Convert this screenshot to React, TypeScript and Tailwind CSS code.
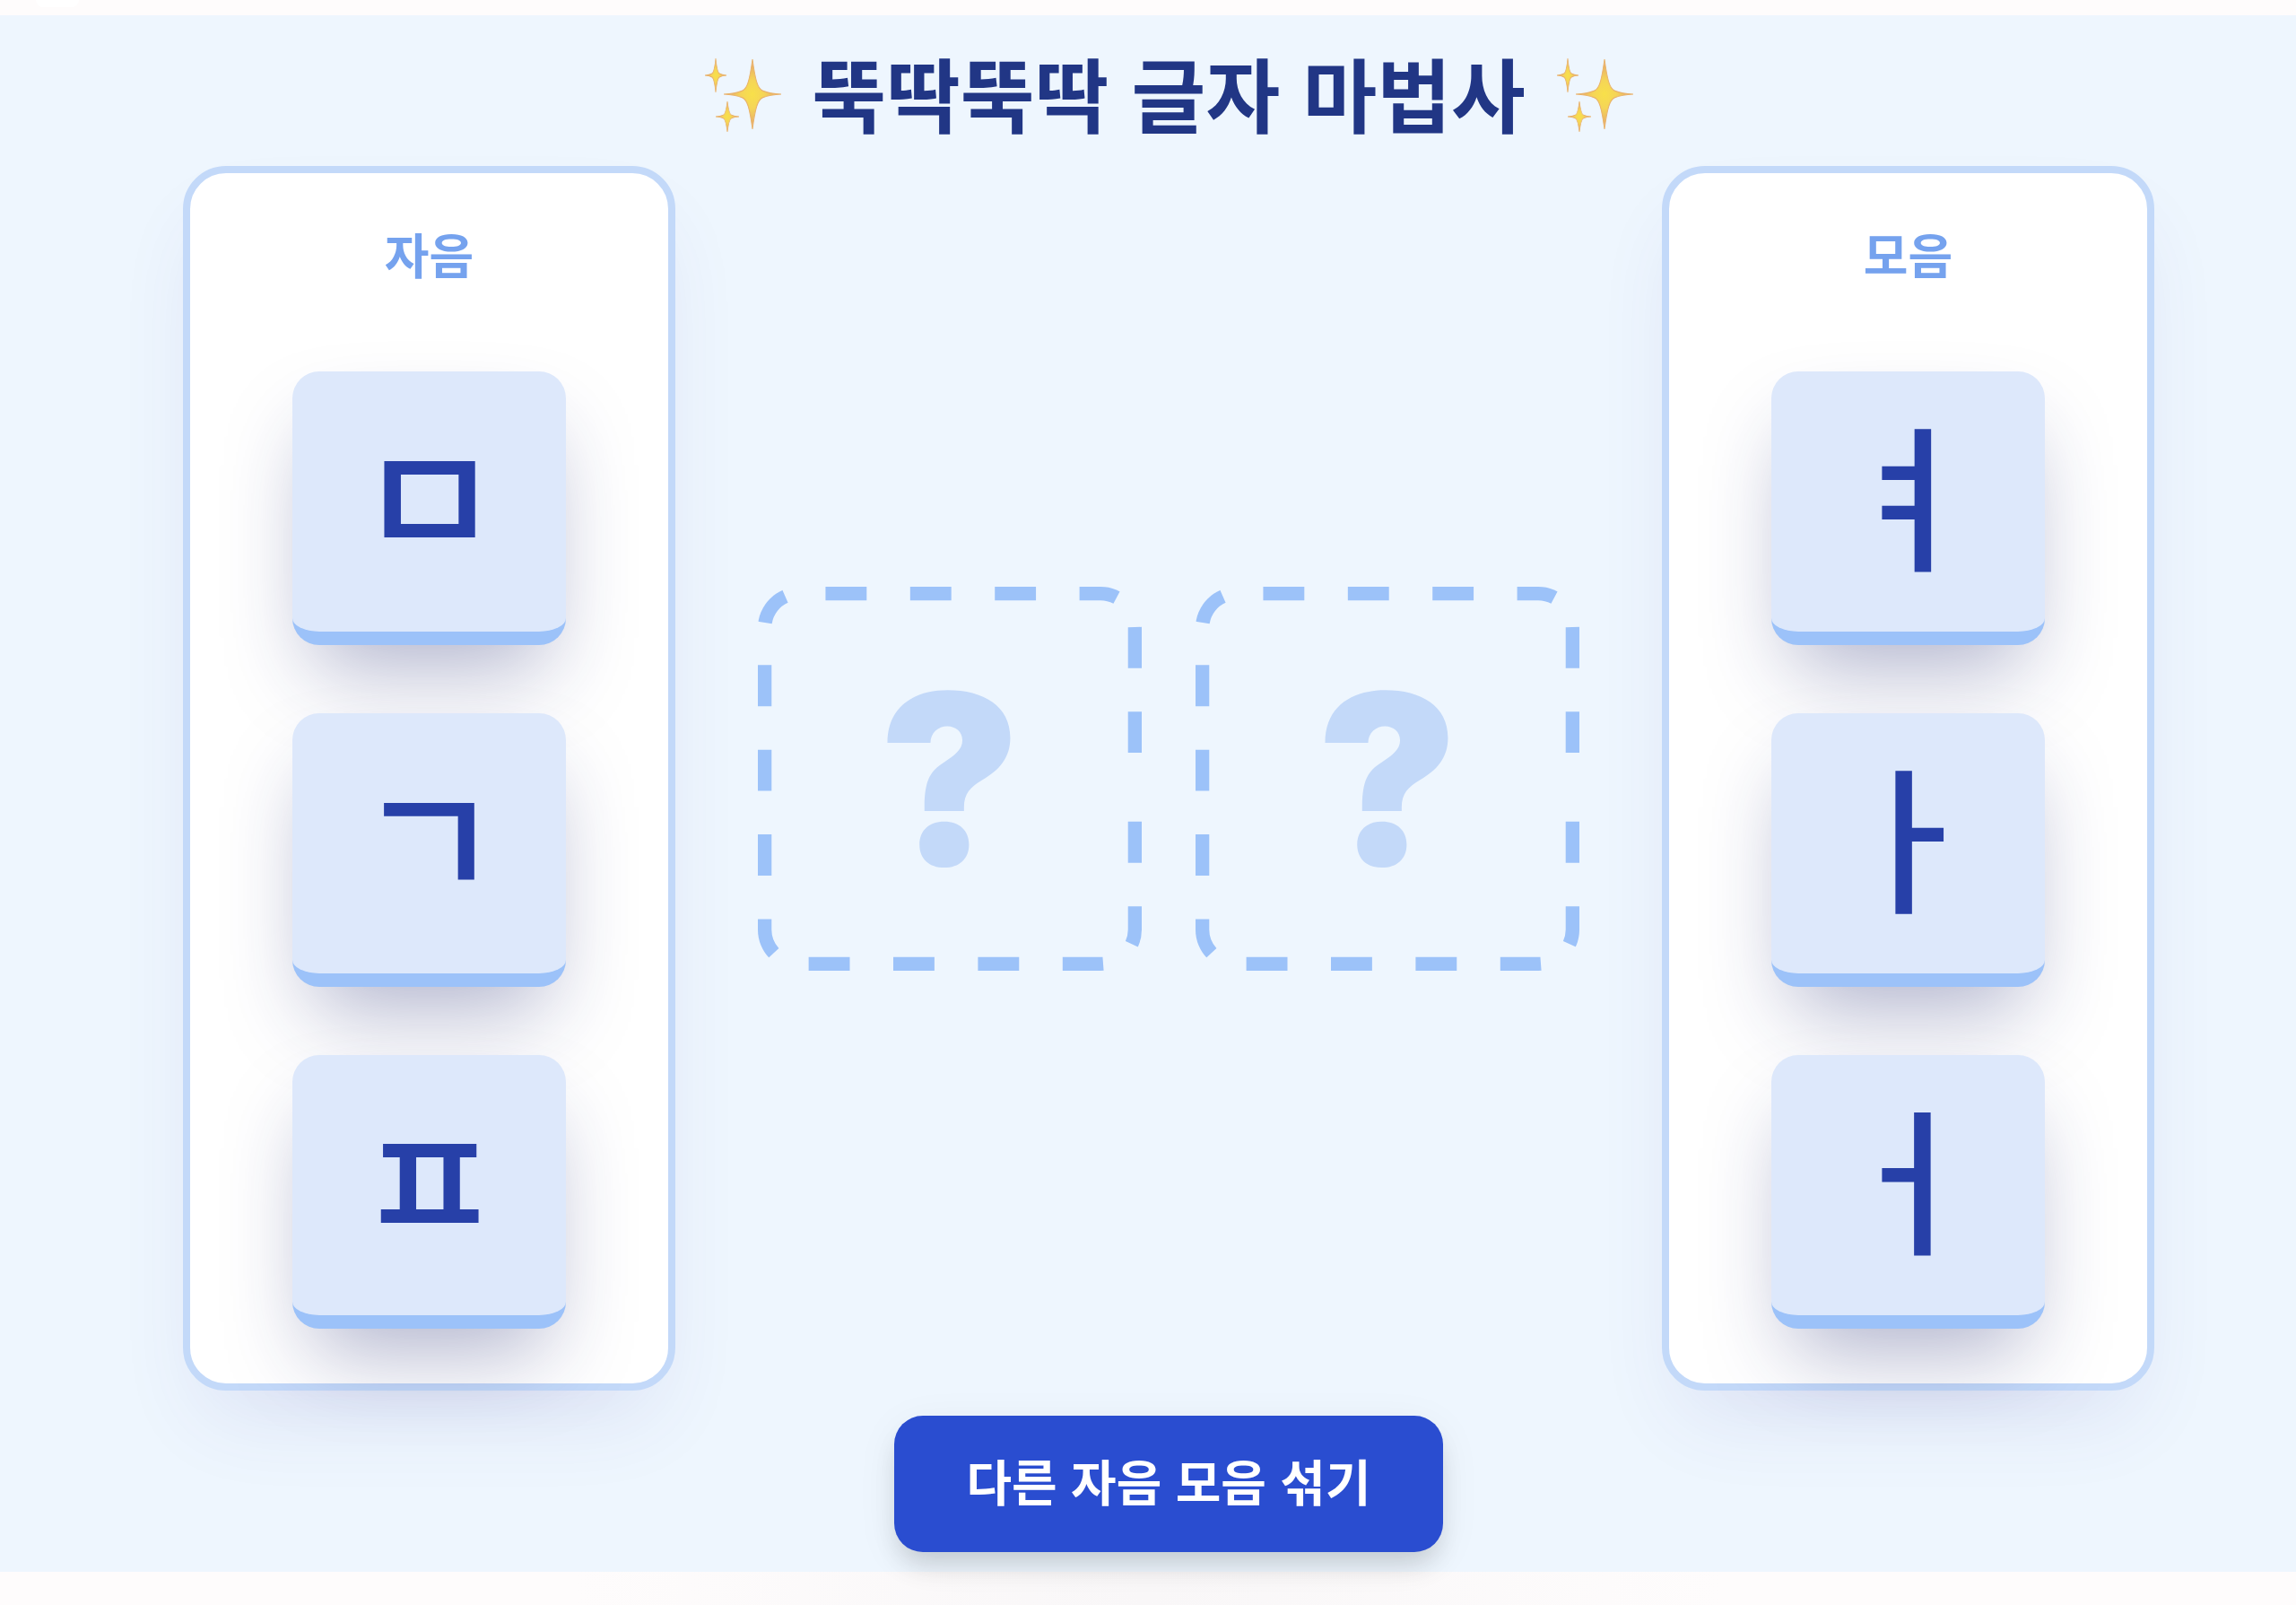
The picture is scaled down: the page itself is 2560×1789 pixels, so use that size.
import { useState } from "react";
import { cva } from "class-variance-authority";

const ROUNDS = [
  { consonants: ["ㅁ", "ㄱ", "ㅍ"], vowels: ["ㅕ", "ㅏ", "ㅓ"] },
  { consonants: ["ㄴ", "ㅅ", "ㅎ"], vowels: ["ㅗ", "ㅣ", "ㅜ"] },
];

const slotText = cva("leading-none", {
  variants: {
    filled: {
      true: "text-[176px] font-medium text-[#2740a8]",
      false: "font-['Inter',sans-serif] text-[264px] font-black text-[#c3d9f9]",
    },
  },
});

// four-pointed star, 20 units across, centred on the origin
const STAR =
  "M0 -10C1 -4 1.8 -1.6 3.5 -1C5 -0.5 7 -0.1 10 0C7 0.1 5 0.5 3.5 1C1.8 1.6 1 4 0 10C-1 4 -1.8 1.6 -3.5 1C-5 0.5 -7 0.1 -10 0C-7 -0.1 -5 -0.5 -3.5 -1C-1.8 -1.6 -1 -4 0 -10Z";

const Sparkles = ({ id }: { id: string }) => (
  <svg viewBox="0 0 90 90" className="size-[90px]" aria-hidden="true">
    <defs>
      <radialGradient id={id}>
        <stop offset="0" stopColor="#f8e04a" />
        <stop offset="0.4" stopColor="#f5d557" />
        <stop offset="1" stopColor="#e3a070" />
      </radialGradient>
    </defs>
    <g fill={`url(#${id})`} stroke="#e9b26a">
      <path
        d={STAR}
        transform="translate(56 48) scale(3.2 3.9)"
        strokeWidth="0.3"
      />
      <path
        d={STAR}
        transform="translate(15 27) scale(1.2 1.9)"
        strokeWidth="0.6"
      />
      <path
        d={STAR}
        transform="translate(28 73) scale(1.3 1.7)"
        strokeWidth="0.6"
      />
    </g>
  </svg>
);

const Column = ({
  title,
  letters,
  onPick,
}: {
  title: string;
  letters: string[];
  onPick: (letter: string) => void;
}) => (
  <section className="flex w-[549px] flex-col items-center rounded-[48px] border-8 border-[#c3d9f9] bg-white px-16 pt-[54px] pb-[61px] shadow-[0_48px_96px_-24px_rgba(70,60,160,0.11)]">
    <h2 className="text-[54px] leading-[72px] font-bold text-[#75a2ee]">
      {title}
    </h2>
    <div className="mt-[95px] flex flex-col gap-[76px]">
      {letters.map((letter) => (
        <button
          key={letter}
          type="button"
          onClick={() => onPick(letter)}
          className="flex size-[305px] items-center justify-center rounded-[30px] border-b-[15px] border-[#9cc2f9] bg-[#dde8fb] pb-[24px] text-[176px] leading-none font-medium text-[#2740a8] shadow-[0_48px_96px_-24px_rgba(30,40,110,0.36)]"
        >
          {letter}
        </button>
      ))}
    </div>
  </section>
);

const Slot = ({ id, letter }: { id: string; letter: string | null }) => (
  <div className="relative flex size-[428px] items-center justify-center">
    <svg
      viewBox="0 0 224 224"
      className="absolute inset-0 size-full"
      aria-hidden="true"
    >
      <clipPath id={id}>
        <rect width="224" height="224" rx="24" />
      </clipPath>
      <path
        d="M224 137V200A24 24 0 0 1 200 224H24A24 24 0 0 1 0 200V24A24 24 0 0 1 24 0H200A24 24 0 0 1 224 24V121"
        fill="none"
        stroke="#9cc2f9"
        strokeWidth="16"
        strokeDasharray="24 25.4"
        clipPath={`url(#${id})`}
      />
    </svg>
    <span className={slotText({ filled: letter !== null })}>
      {letter ?? "?"}
    </span>
  </div>
);

const App = () => {
  const [round, setRound] = useState(0);
  const [consonant, setConsonant] = useState<string | null>(null);
  const [vowel, setVowel] = useState<string | null>(null);

  const { consonants, vowels } = ROUNDS[round];

  const handleShuffle = () => {
    setRound((round + 1) % ROUNDS.length);
    setConsonant(null);
    setVowel(null);
  };

  return (
    <div
      lang="ko"
      className="min-h-screen bg-[#fefcfc] font-['Noto_Sans_CJK_KR',sans-serif]"
    >
      <div className="h-[17px] px-[40px]">
        <div className="h-2 w-12 rounded-b-full bg-white" />
      </div>
      <main className="flex flex-col items-center bg-[#eef6fe] pt-[19px] pr-[158px] pb-[22px] pl-[204px]">
        <h1 className="flex items-center gap-[32px] text-[90px] leading-[132px] font-bold text-[#213685]">
          <Sparkles id="sparkle-left" />
          뚝딱뚝딱 글자 마법사
          <Sparkles id="sparkle-right" />
        </h1>

        <div className="mt-[17px] flex w-full items-center justify-between">
          <Column title="자음" letters={consonants} onPick={setConsonant} />
          <div className="flex gap-[60px]">
            <Slot id="slot-consonant" letter={consonant} />
            <Slot id="slot-vowel" letter={vowel} />
          </div>
          <Column title="모음" letters={vowels} onPick={setVowel} />
        </div>

        <button
          type="button"
          onClick={handleShuffle}
          className="mt-[28px] h-[152px] rounded-[32px] bg-[#2a4dd0] px-[80px] pb-[10px] text-[55px] font-bold text-white shadow-[0_19px_29px_-6px_rgba(0,0,0,0.14),0_10px_48px_0_rgba(0,0,0,0.06)]"
        >
          다른 자음 모음 섞기
        </button>
      </main>
      <div className="mx-auto h-[38px] w-1/2 bg-linear-to-r from-transparent via-[#f9f7f8] to-transparent" />
    </div>
  );
};

export default App;
